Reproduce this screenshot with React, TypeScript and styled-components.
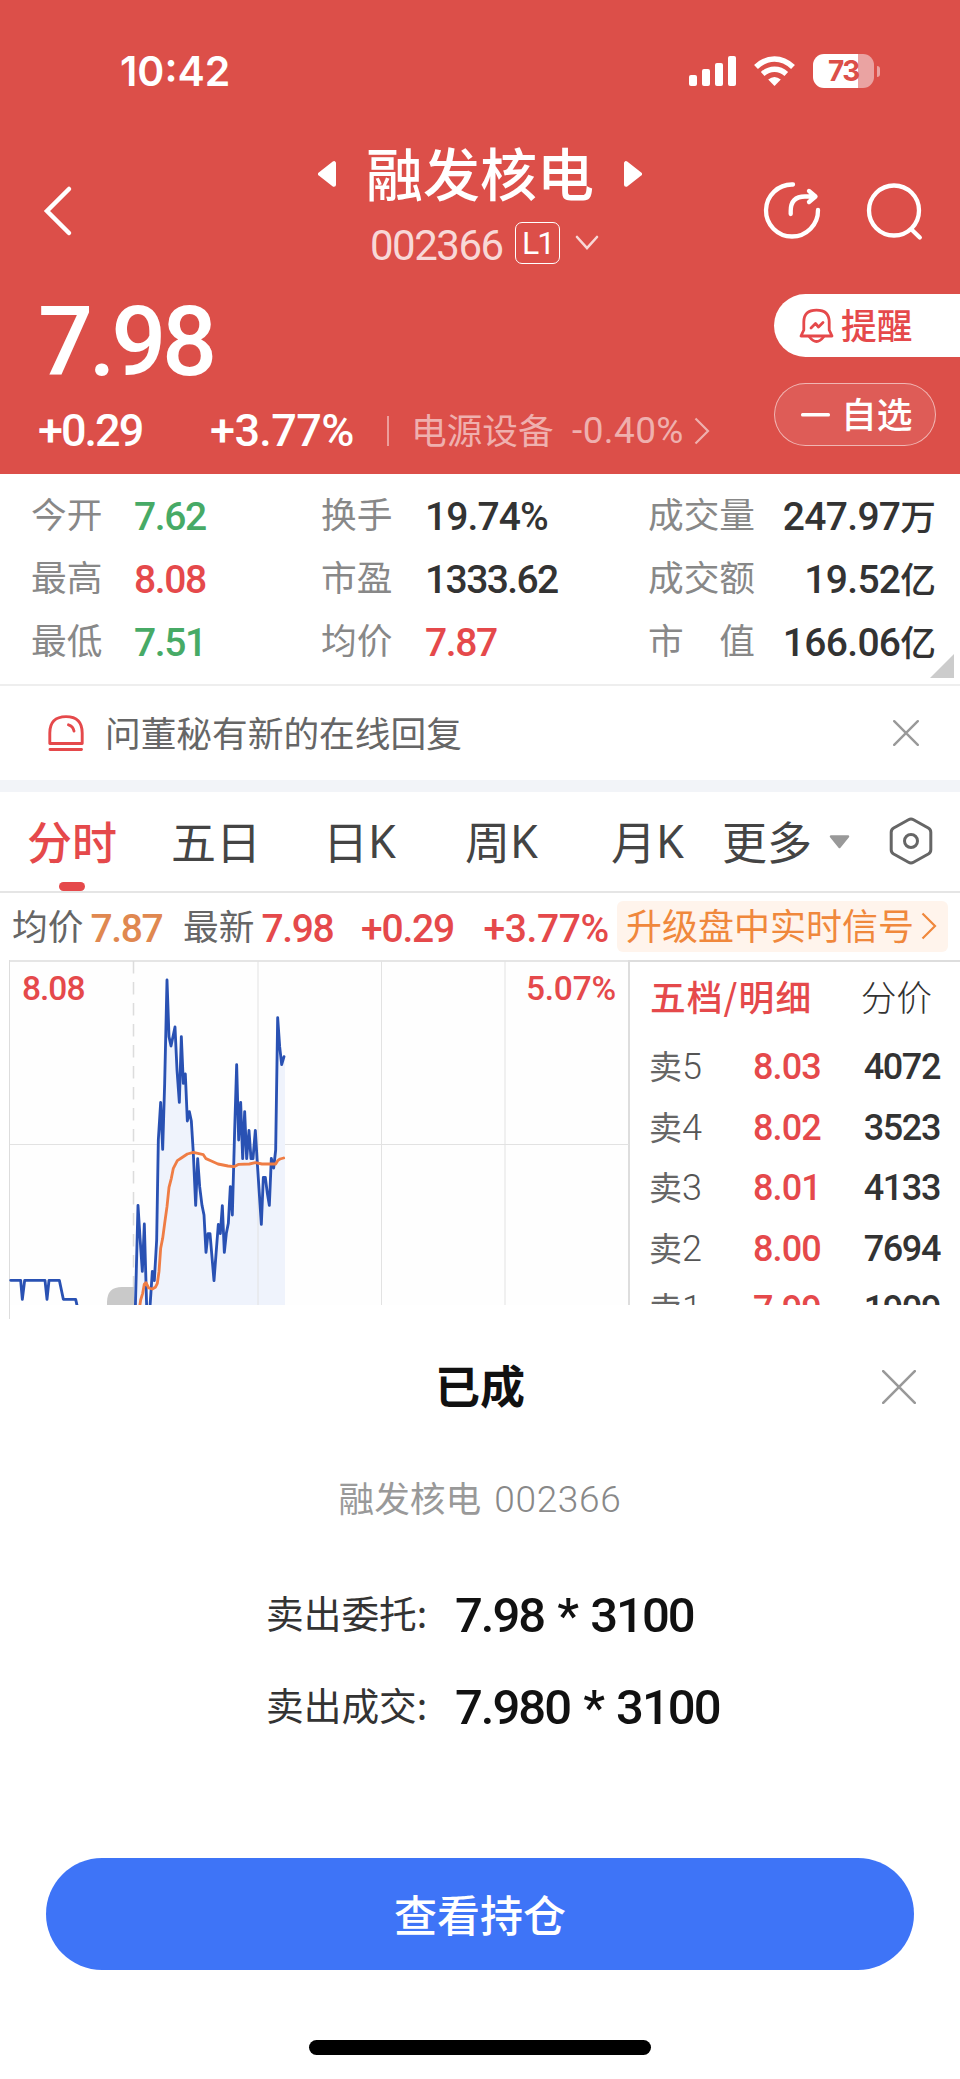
import React from 'react';
import styled, { createGlobalStyle } from 'styled-components';

const RED = '#e5494b';
const GREEN = '#47aa66';
const HEADER = '#dc4f49';
const ORANGE = '#f0883c';

const GlobalStyle = createGlobalStyle`
  * { box-sizing: border-box; }
  html, body { margin: 0; padding: 0; background: #fff; }
  body { width: 960px; overflow-x: hidden; }
  svg { display: block; flex: none; }
  button { border: 0; background: none; padding: 0; margin: 0; font: inherit; }
`;

const Screen = styled.div`
  width: 960px;
  height: 2079px;
  display: flex;
  flex-direction: column;
  overflow: hidden;
  background: #fff;
  font-family: 'Noto Sans CJK SC', sans-serif;
  white-space: nowrap;
`;

/* Chinese text; the glyph box is lifted so it centres in its line */
const Label = styled.span<{ $size?: number; $color?: string; $weight?: number; $track?: number }>`
  font-size: ${(p) => p.$size ?? 35.7}px;
  line-height: 44px;
  height: 44px;
  margin-top: -4px;
  font-weight: ${(p) => p.$weight ?? 400};
  letter-spacing: ${(p) => p.$track ?? 0}px;
  color: ${(p) => p.$color ?? '#666'};
  flex: none;
`;

const Num = styled.span<{ $size?: number; $color?: string; $weight?: number; $track?: number }>`
  font-family: Roboto, 'Noto Sans CJK SC', sans-serif;
  font-size: ${(p) => p.$size ?? 39}px;
  line-height: 1;
  font-weight: ${(p) => p.$weight ?? 500};
  letter-spacing: ${(p) => p.$track ?? -1.4}px;
  color: ${(p) => p.$color ?? '#333'};
  flex: none;
`;

/* ---------- header ---------- */
const Header = styled.header`
  flex: none;
  height: 474px;
  background: ${HEADER};
  color: #fff;
  display: flex;
  flex-direction: column;
`;

const StatusBar = styled.div`
  height: 142px;
  padding: 0 79px 0 120px;
  display: flex;
  align-items: center;
  justify-content: space-between;
`;

const Clock = styled.span`
  font: 600 41px/1 Inter, sans-serif;
  letter-spacing: 0;
`;

const StatusIcons = styled.div`
  display: flex;
  align-items: center;
`;

const NavBar = styled.div`
  height: 138px;
  display: grid;
  grid-template-columns: 300px 360px 300px;
`;

const NavSide = styled.div<{ $end?: boolean }>`
  display: flex;
  align-items: center;
  justify-content: ${(p) => (p.$end ? 'flex-end' : 'flex-start')};
  padding: ${(p) => (p.$end ? '0 36px 0 0' : '0 0 0 42px')};
  gap: 42px;
`;

const NavTitle = styled.div`
  display: flex;
  flex-direction: column;
  align-items: center;
`;

const TitleRow = styled.div`
  width: 324px;
  height: 64px;
  display: flex;
  align-items: center;
  justify-content: space-between;
`;

const TitleText = styled.div`
  display: flex;
  padding-bottom: 2px;
`;

const CodeRow = styled.div`
  width: 360px;
  height: 74px;
  padding-left: 70px;
  display: flex;
  align-items: center;
`;

const StockCode = styled.span`
  width: 145px;
  padding-top: 5px;
  display: flex;
`;

const LevelTag = styled.span`
  width: 45px;
  height: 42px;
  margin-right: 15px;
  border: 1px solid #fff;
  border-radius: 7px;
  display: flex;
  align-items: center;
  justify-content: center;
`;

const Quote = styled.div`
  flex: 1;
  display: flex;
  justify-content: space-between;
`;

const QuoteMain = styled.div`
  padding-left: 38px;
  display: flex;
  flex-direction: column;
`;

const Price = styled.div`
  height: 125px;
  display: flex;
  align-items: center;
`;

const ChangeRow = styled.div`
  display: flex;
  align-items: center;
  height: 51px;
`;

const Cell = styled.span<{ $w: number }>`
  width: ${(p) => p.$w}px;
  flex: none;
  display: flex;
`;

const Divider = styled.i`
  width: 2px;
  height: 30px;
  margin-right: 22px;
  background: rgba(255, 255, 255, 0.45);
`;

const QuoteActions = styled.div`
  width: 186px;
  padding-top: 14px;
  display: flex;
  flex-direction: column;
  gap: 26px;
`;

const RemindButton = styled.button`
  height: 63px;
  padding-left: 25px;
  display: flex;
  align-items: center;
  gap: 7px;
  border-radius: 32px 0 0 32px;
  background: #fff;
`;

const WatchButton = styled.button`
  width: 162px;
  height: 63px;
  padding-left: 26px;
  display: flex;
  align-items: center;
  gap: 11px;
  border: 1.5px solid rgba(255, 255, 255, 0.55);
  border-radius: 32px;
  background: rgba(255, 255, 255, 0.08);
`;

/* ---------- stats ---------- */
const Stats = styled.section`
  flex: none;
  position: relative;
  height: 212px;
  padding: 9px 24px 0 31px;
  display: grid;
  grid-template-columns: 290px 327px 288px;
  grid-template-rows: repeat(3, 63px);
  border-bottom: 2px solid #eee;
`;

const Stat = styled.div<{ $right?: boolean }>`
  display: flex;
  align-items: center;
  justify-content: ${(p) => (p.$right ? 'space-between' : 'flex-start')};
`;

const StatLabel = styled.div<{ $w?: number }>`
  width: ${(p) => (p.$w ? p.$w + 'px' : 'auto')};
  display: flex;
`;

const StatValue = styled.div`
  display: flex;
  align-items: center;
  margin-top: 5px;
`;

const Corner = styled.i`
  position: absolute;
  right: 6px;
  bottom: 6px;
  border-left: 24px solid transparent;
  border-bottom: 24px solid #ccc;
`;

const Notice = styled.section`
  flex: none;
  height: 94px;
  padding: 0 41px 0 48px;
  display: flex;
  align-items: center;
`;

const NoticeText = styled.div`
  flex: 1;
  display: flex;
  padding: 1px 0 0 21px;
`;

const Band = styled.div`
  flex: none;
  height: 12px;
  background: #f2f4f8;
`;

/* ---------- tabs ---------- */
const Tabs = styled.nav`
  flex: none;
  height: 101px;
  padding-left: 27px;
  display: flex;
  align-items: stretch;
  border-bottom: 2px solid #e5e5e5;
`;

const Tab = styled.div<{ $w: number; $active?: boolean }>`
  position: relative;
  width: ${(p) => p.$w}px;
  flex: none;
  display: flex;
  align-items: center;
  padding-bottom: 1px;
  font-size: 45px;
  line-height: 60px;
  font-weight: ${(p) => (p.$active ? 500 : 400)};
  color: ${(p) => (p.$active ? RED : '#444')};

  &::after {
    content: '';
    display: ${(p) => (p.$active ? 'block' : 'none')};
    position: absolute;
    left: 32px;
    bottom: 0;
    width: 26px;
    height: 9px;
    border-radius: 5px;
    background: ${RED};
  }
`;

const Latin = styled.span`
  font-family: 'Noto Sans', sans-serif;
  font-size: 45px;
`;

/* ---------- info row ---------- */
const InfoRow = styled.section`
  flex: none;
  height: 67px;
  padding: 0 12px 0 12px;
  display: flex;
  align-items: center;
`;

const InfoLabel = styled.span`
  width: 78.5px;
  flex: none;
  display: flex;
`;

const InfoNum = styled.span<{ $w: number }>`
  width: ${(p) => p.$w}px;
  flex: none;
  display: flex;
  padding-top: 6px;
`;

const SignalLink = styled.div`
  width: 331px;
  height: 51px;
  margin-top: -1px;
  padding-left: 9px;
  border-radius: 6px;
  background: #fff4ec;
  display: flex;
  align-items: center;
  gap: 7px;
`;

/* ---------- chart + order book ---------- */
const Market = styled.section`
  flex: none;
  height: 359px;
  display: flex;
`;

const ChartBox = styled.div`
  position: relative;
  width: 630px;
`;

const ScaleLabel = styled.div<{ $right?: boolean }>`
  position: absolute;
  top: 12px;
  ${(p) => (p.$right ? 'right: 14px;' : 'left: 22px;')}
  display: flex;
`;

const Book = styled.div`
  width: 330px;
  height: 345px;
  overflow: hidden;
  border-top: 2px solid #ddd;
`;

const BookHead = styled.div`
  height: 75px;
  padding: 0 28px 4px 20px;
  display: flex;
  align-items: center;
  justify-content: space-between;
`;

const BookRow = styled.div`
  height: 60.5px;
  padding: 0 20px 0 19px;
  display: grid;
  grid-template-columns: 104px 1fr auto;
  align-items: center;
`;

const Level = styled.span`
  display: flex;
  align-items: center;
`;

/* ---------- sheet ---------- */
const Sheet = styled.section`
  flex: 1;
  background: #fff;
  display: flex;
  flex-direction: column;
  align-items: center;
`;

const SheetHead = styled.div`
  width: 960px;
  height: 135px;
  padding: 0 44px;
  display: grid;
  grid-template-columns: 34px 1fr 34px;
  align-items: center;
  justify-items: center;
`;

const SheetSub = styled.div`
  height: 90px;
  display: flex;
  align-items: center;
  gap: 13px;
`;

const Order = styled.div`
  width: 960px;
  height: 92px;
  padding-left: 266px;
  display: flex;
  align-items: center;
  word-spacing: 3px;
`;

const Orders = styled.div`
  padding-top: 25px;
`;

const OrderLabel = styled.div`
  width: 189px;
  padding-bottom: 3px;
  display: flex;
`;

const PrimaryButton = styled.button`
  width: 868px;
  height: 112px;
  margin-top: 105px;
  padding-top: 1px;
  border-radius: 56px;
  background: #3e74f7;
  display: flex;
  align-items: center;
  justify-content: center;
`;

const HomeIndicator = styled.i`
  width: 342px;
  height: 15px;
  margin-top: 70px;
  border-radius: 8px;
  background: #000;
`;

/* ---------- icons ---------- */
const Cross = ({ size, stroke }: { size: number; stroke: number }) => (
  <svg width={size} height={size} viewBox={`0 0 ${size} ${size}`}>
    <path
      d={`M1.2 1.2L${size - 1.2} ${size - 1.2}M${size - 1.2} 1.2L1.2 ${size - 1.2}`}
      stroke="#999"
      strokeWidth={stroke}
      strokeLinecap="round"
    />
  </svg>
);

const ChevronRight = ({ color }: { color: string }) => (
  <svg width="16" height="28" viewBox="0 0 16 28">
    <path d="M1.5 1.5L14 14L1.5 26.5" fill="none" stroke={color} strokeWidth="2.2" />
  </svg>
);

const TitleArrow = ({ flip }: { flip?: boolean }) => (
  <svg width="18" height="26" viewBox="0 0 18 26">
    <path
      d="M16 2.2V23.8L2 13Z"
      fill="#fff"
      stroke="#fff"
      strokeWidth="4"
      strokeLinejoin="round"
      transform={flip ? 'translate(18 0) scale(-1 1)' : undefined}
    />
  </svg>
);

const SignalIcon = () => (
  <svg width="47" height="30" viewBox="0 0 47 30" fill="#fff">
    <rect x="0" y="19" width="8" height="11" rx="2" />
    <rect x="13" y="13" width="8" height="17" rx="2" />
    <rect x="26" y="7" width="8" height="23" rx="2" />
    <rect x="39" y="0" width="8" height="30" rx="2" />
  </svg>
);

const WifiSvg = styled.svg`
  margin-left: 18px;
`;

const WifiIcon = () => (
  <WifiSvg width="41" height="30" viewBox="0 0 41 30" fill="none" stroke="#fff">
    <path d="M2 11Q10.500 3 20.500 3Q30.500 3 39 11" strokeWidth="5.600" />
    <path d="M8.700 18Q14 13.200 20.500 13.200Q27 13.200 32.300 18" strokeWidth="5.400" />
    <path d="M20.500 30L14.200 23.600Q20.500 18.200 26.800 23.600Z" fill="#fff" stroke="none" />
  </WifiSvg>
);

const Battery = styled.div`
  position: relative;
  width: 61px;
  height: 34px;
  margin-left: 18px;
  margin-right: 7px;
  border-radius: 11px;
  background: linear-gradient(to right, #fff 45px, #eaa3a2 45px);
  font: 700 28px/35px Inter, sans-serif;
  letter-spacing: -1.4px;
  text-align: center;
  color: ${HEADER};

  &::after {
    content: '';
    position: absolute;
    left: 64px;
    top: 12px;
    width: 3px;
    height: 11px;
    border-radius: 0 4px 4px 0;
    background: #eaa3a2;
  }
`;

const BackIcon = () => (
  <svg width="32" height="52" viewBox="0 0 32 52">
    <path d="M27 4L5 26L27 48" fill="none" stroke="#fff" strokeWidth="4.500" strokeLinecap="round" />
  </svg>
);

const ShareIcon = () => (
  <svg width="60" height="60" viewBox="0 0 60 60" fill="none" stroke="#fff" strokeWidth="4.300" strokeLinecap="round" strokeLinejoin="round">
    <path d="M31 3.500A26 26 0 1 0 56 29" />
    <path d="M28.700 33V30Q28.700 15.500 43 15.500H53M47 10L53.500 15.500L47 21" />
  </svg>
);

const SearchIcon = () => (
  <svg width="60" height="60" viewBox="0 0 60 60" fill="none" stroke="#fff" strokeWidth="4.300" strokeLinecap="round">
    <circle cx="30" cy="29.500" r="25" />
    <path d="M47.500 48.500L55.800 56.500" />
  </svg>
);

const BellIcon = () => (
  <svg width="35" height="36" viewBox="0 0 35 36" fill="none" stroke={RED} strokeWidth="2.800" strokeLinecap="round" strokeLinejoin="round">
    <path d="M2 28H33L30.200 22V14Q30.200 2.200 17.500 2.200Q4.800 2.200 4.800 14V22Z" />
    <path d="M10.500 29Q17.500 38 24.500 29" />
    <path d="M12 20L16.500 15.500L19.500 19L24 14.500" />
  </svg>
);

const SirenIcon = () => (
  <svg width="36" height="36" viewBox="0 0 36 36" fill="none" stroke={RED} strokeWidth="2.900" strokeLinecap="round">
    <path d="M1.800 28.500V18Q1.800 1.600 18 1.600Q34.200 1.600 34.200 18V28.500Z" strokeLinejoin="round" />
    <path d="M2 34.500H33.500M20.500 9.800Q25 11 26 16" />
  </svg>
);

const GearIcon = () => (
  <svg width="44" height="48" viewBox="0 0 44 48" fill="none" stroke="#666" strokeWidth="3">
    <path d="M19.500 2.800Q22 1.400 24.500 2.800L39.300 11Q41.800 12.500 41.800 15.200V32.800Q41.800 35.500 39.300 37L24.500 45.200Q22 46.600 19.500 45.200L4.700 37Q2.200 35.500 2.200 32.800V15.200Q2.200 12.500 4.700 11Z" />
    <circle cx="22" cy="24" r="6.500" />
  </svg>
);

const PRICE_LINE =
  'M406 1075L414 766L420 862L427 964L433 822L440 1070L450 1070L457 964L463 992L470 870L475 570L482 457L488 598L494 400L501 90L507 260L513 288L525 231L531 360L538 457L544 260L550 400L556 372L562 513L568 485L574 513L580 610L587 766L593 626L599 710L606 766L612 795L618 907L624 851L630 851L642 992L649 900L655 823L661 851L667 767L673 907L679 850L685 820L691 710L697 795L704 540L710 344L716 570L722 457L728 626L734 485L740 626L747 541L753 626L759 626L766 541L772 640L784 823L790 682L796 682L802 730L808 766L814 625L821 654L827 600L833 203L839 290L845 344L852 320';

const Chart = () => (
  <svg width="630" height="359" viewBox="0 0 630 359" fill="none">
    <clipPath id="plot">
      <rect x="0" y="0" width="630" height="345" />
    </clipPath>
    <rect x="10" y="2" width="619" height="343" fill="#fefefe" />
    <path d="M9.500 0V359" stroke="#ddd" />
    <path d="M9 1H630" stroke="#ddd" strokeWidth="1.500" />
    <path d="M629 0V345" stroke="#ddd" strokeWidth="2" />
    <g clipPath="url(#plot)">
      <path d="M10 184.500H629" stroke="#e2e2e2" />
      <path d="M133.500 1V345" stroke="#dcdcdc" strokeWidth="1.500" strokeDasharray="12.500 8.500" />
      <g transform="translate(0 -10) scale(0.333333)">
        <path d={`${PRICE_LINE}H855V1075Z`} fill="#eff3fc" />
      </g>
      <path d="M258 1V345M381.500 1V345M505 1V345" stroke="#e2e2e2" />
      <path d="M107 345V342Q107 327 122 327H134V345Z" fill="#c9c9c9" />
      <g transform="translate(0 -10) scale(0.333333)" strokeLinejoin="round" strokeLinecap="round" strokeWidth="8.500">
        <path
          d="M32 991H62L67 1048L74 991H135L141 1048L147 991H178L190 1048H227L233 1075"
          stroke="#2951b3"
        />
        <path d={PRICE_LINE} stroke="#2951b3" />
        <path
          d="M419 1070L422 1050L428 1030L433 1002L438 998L446 1014L457 1017L466 1012L472 1000L477 965L482 895L488 865L494 820L501 770L507 712L514 685L520 655L532 632L544 624L562 612L580 607L610 614L618 626L634 633L654 642L684 648L702 650L716 643L748 642L766 638L786 642H827L834 631L840 627L851 624"
          stroke="#ef7d45"
        />
      </g>
    </g>
  </svg>
);

type StatItem = { label: string; value: string; color?: string; unit?: string; track?: number };
const stats: StatItem[][] = [
  [
    { label: '今开', value: '7.62', color: GREEN },
    { label: '换手', value: '19.74%', track: -0.9 },
    { label: '成交量', value: '247.97', unit: '万', track: -0.7 },
  ],
  [
    { label: '最高', value: '8.08', color: RED },
    { label: '市盈', value: '1333.62', track: -1.6 },
    { label: '成交额', value: '19.52', unit: '亿', track: -0.7 },
  ],
  [
    { label: '最低', value: '7.51', color: GREEN },
    { label: '均价', value: '7.87', color: RED },
    { label: '市\u3000值', value: '166.06', unit: '亿', track: -0.7 },
  ],
];

const asks = [
  ['5', '8.03', '4072'],
  ['4', '8.02', '3523'],
  ['3', '8.01', '4133'],
  ['2', '8.00', '7694'],
  ['1', '7.99', '1909'],
];

export default function App() {
  return (
    <>
      <GlobalStyle />
      <Screen>
        <Header>
          <StatusBar>
            <Clock>10:42</Clock>
            <StatusIcons>
              <SignalIcon />
              <WifiIcon />
              <Battery>73</Battery>
            </StatusIcons>
          </StatusBar>
          <NavBar>
            <NavSide>
              <BackIcon />
            </NavSide>
            <NavTitle>
              <TitleRow>
                <TitleArrow />
                <TitleText>
                  <Label $size={57} $weight={500} $color="#fff">融发核电</Label>
                </TitleText>
                <TitleArrow flip />
              </TitleRow>
              <CodeRow>
                <StockCode>
                  <Num $size={42} $weight={400} $track={-1.5} $color="#f8d8d7">002366</Num>
                </StockCode>
                <LevelTag>
                  <Num $size={32} $weight={400} $track={-2} $color="#fff">L1</Num>
                </LevelTag>
                <svg width="24" height="16" viewBox="0 0 24 16">
                  <path d="M2 2L12 13L22 2" fill="none" stroke="#f8d8d7" strokeWidth="2.600" strokeLinecap="round" />
                </svg>
              </CodeRow>
            </NavTitle>
            <NavSide $end>
              <ShareIcon />
              <SearchIcon />
            </NavSide>
          </NavBar>
          <Quote>
            <QuoteMain>
              <Price>
                <Num $size={97} $track={-4.4} $color="#fff">7.98</Num>
              </Price>
              <ChangeRow>
                <Cell $w={172}>
                  <Num $size={45} $track={-2} $color="#fff">+0.29</Num>
                </Cell>
                <Cell $w={177}>
                  <Num $size={45} $track={-0.6} $color="#fff">+3.77%</Num>
                </Cell>
                <Divider />
                <Cell $w={161}>
                  <Label $color="#efb0ae">电源设备</Label>
                </Cell>
                <Cell $w={122}>
                  <Num $size={37} $weight={400} $track={0.4} $color="#efb0ae">-0.40%</Num>
                </Cell>
                <ChevronRight color="#efb0ae" />
              </ChangeRow>
            </QuoteMain>
            <QuoteActions>
              <RemindButton>
                <BellIcon />
                <Label $weight={500} $color={RED}>提醒</Label>
              </RemindButton>
              <WatchButton>
                <svg width="29" height="4" viewBox="0 0 29 4">
                  <rect width="29" height="3.600" rx="1.500" fill="#fff" />
                </svg>
                <Label $weight={500} $color="#fff">自选</Label>
              </WatchButton>
            </QuoteActions>
          </Quote>
        </Header>

        <Stats>
          {stats.flat().map((s, i) => (
            <Stat key={i} $right={!!s.unit}>
              <StatLabel $w={s.unit ? undefined : i % 3 === 0 ? 103 : 104}>
                <Label $color="#888">{s.label}</Label>
              </StatLabel>
              <StatValue>
                <Num $color={s.color} $track={s.track}>{s.value}</Num>
                {s.unit && <Label $weight={500} $color="#333">{s.unit}</Label>}
              </StatValue>
            </Stat>
          ))}
          <Corner />
        </Stats>

        <Notice>
          <SirenIcon />
          <NoticeText>
            <Label>问董秘有新的在线回复</Label>
          </NoticeText>
          <Cross size={26} stroke={2.4} />
        </Notice>
        <Band />

        <Tabs>
          <Tab $w={144} $active>分时</Tab>
          <Tab $w={152}>五日</Tab>
          <Tab $w={142}>日<Latin>K</Latin></Tab>
          <Tab $w={146}>周<Latin>K</Latin></Tab>
          <Tab $w={111}>月<Latin>K</Latin></Tab>
          <Tab $w={107}>更多</Tab>
          <Tab $w={60}>
            <svg width="21" height="15" viewBox="0 0 21 15">
              <path d="M2 2.500H19L10.500 13Z" fill="#999" stroke="#999" strokeWidth="2.500" strokeLinejoin="round" />
            </svg>
          </Tab>
          <Tab $w={50}>
            <GearIcon />
          </Tab>
        </Tabs>

        <InfoRow>
          <InfoLabel><Label>均价</Label></InfoLabel>
          <InfoNum $w={92.5}><Num $color="#e08850">7.87</Num></InfoNum>
          <InfoLabel><Label>最新</Label></InfoLabel>
          <InfoNum $w={99.5}><Num $color={RED}>7.98</Num></InfoNum>
          <InfoNum $w={122.5}><Num $color={RED} $track={-1.2}>+0.29</Num></InfoNum>
          <InfoNum $w={133.5}><Num $color={RED} $track={-0.4}>+3.77%</Num></InfoNum>
          <SignalLink>
            <Label $size={36} $color={ORANGE}>升级盘中实时信号</Label>
            <ChevronRight color={ORANGE} />
          </SignalLink>
        </InfoRow>

        <Market>
          <ChartBox>
            <Chart />
            <ScaleLabel>
              <Num $size={33.5} $track={-1} $color={RED}>8.08</Num>
            </ScaleLabel>
            <ScaleLabel $right>
              <Num $size={33.5} $track={-0.2} $color={RED}>5.07%</Num>
            </ScaleLabel>
          </ChartBox>
          <Book>
            <BookHead>
              <Label $weight={500} $color={RED} $track={1.1}>五档/明细</Label>
              <Label $weight={300} $color="#333">分价</Label>
            </BookHead>
            {asks.map(([n, price, vol]) => (
              <BookRow key={n}>
                <Level>
                  <Label $size={33}>卖</Label>
                  <Num $size={36} $weight={300} $color="#555">{n}</Num>
                </Level>
                <Num $size={36} $track={-0.9} $color={RED}>{price}</Num>
                <Num $size={36} $track={-1.4}>{vol}</Num>
              </BookRow>
            ))}
          </Book>
        </Market>

        <Sheet>
          <SheetHead>
            <span />
            <Label $size={45} $weight={700} $color="#111">已成</Label>
            <Cross size={34} stroke={2.6} />
          </SheetHead>
          <SheetSub>
            <Label $color="#999">融发核电</Label>
            <Num $weight={300} $size={37} $track={0.7} $color="#888">002366</Num>
          </SheetSub>
          <Orders>
            <Order>
              <OrderLabel><Label $size={37.7} $color="#333">卖出委托:</Label></OrderLabel>
              <Num $size={49} $track={-2} $color="#111">7.98 * 3100</Num>
            </Order>
            <Order>
              <OrderLabel><Label $size={37.7} $color="#333">卖出成交:</Label></OrderLabel>
              <Num $size={49} $track={-2} $color="#111">7.980 * 3100</Num>
            </Order>
          </Orders>
          <PrimaryButton>
            <Label $size={43} $weight={500} $color="#fff">查看持仓</Label>
          </PrimaryButton>
          <HomeIndicator />
        </Sheet>
      </Screen>
    </>
  );
}
